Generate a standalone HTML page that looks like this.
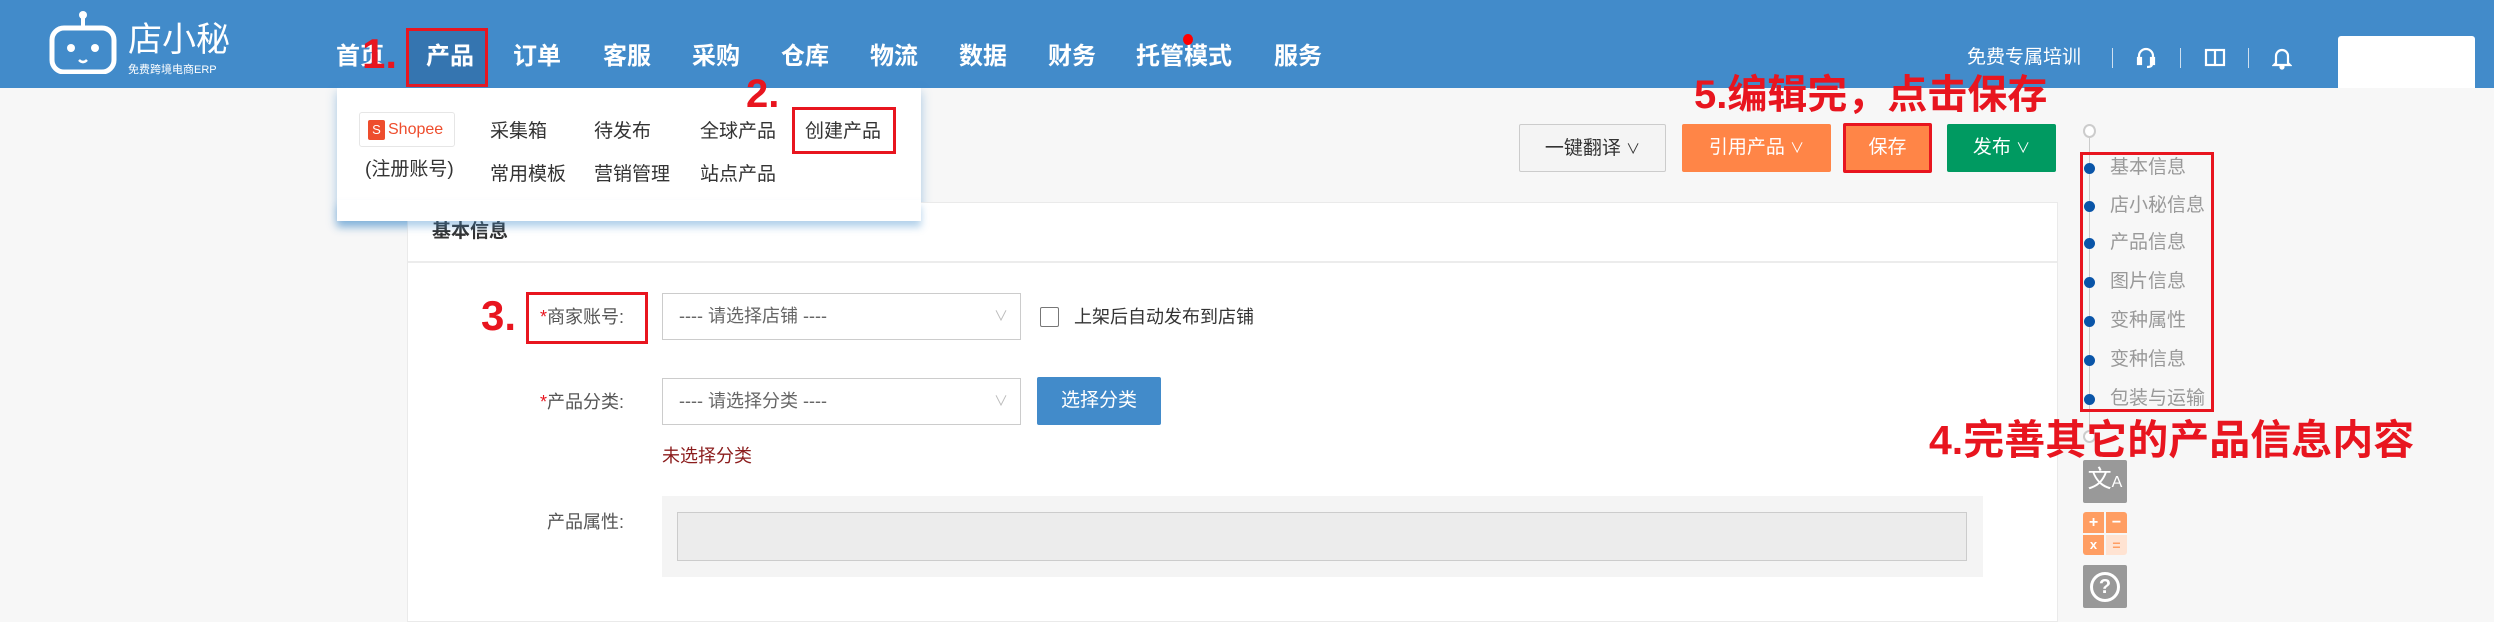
<!DOCTYPE html>
<html><head><meta charset="utf-8"><style>
*{margin:0;padding:0;box-sizing:border-box}
body{width:2494px;height:616px;overflow:hidden;background:#f7f7f7;font-family:"Liberation Sans","Noto Sans CJK SC",sans-serif;position:relative}
.a{position:absolute}
.hdr{left:0;top:0;width:2494px;height:88px;background:#428bca}
.nav{top:40px;color:#fff;font-size:24px;font-weight:bold;line-height:34px}
.red{color:#e8151f;font-weight:bold}
.dd{left:337px;top:88px;width:584px;height:133px;background:#fff;box-shadow:0 4px 10px rgba(66,139,202,.45)}
.di{font-size:19px;color:#333;line-height:24px}
.btn{height:48px;line-height:48px;text-align:center;font-size:19px;color:#fff;border-radius:2px}
.btn i{font-style:normal;font-size:14px}
.lbl{font-size:18px;color:#555;line-height:24px}
.sel{left:662px;width:359px;height:47px;border:1px solid #ccc;background:#fff;font-size:18px;color:#666;line-height:45px;padding-left:16px}
.sel span{position:absolute;right:12px;color:#bbb;font-size:14px}
.ni{left:2110px;font-size:19px;color:#999;line-height:24px}
.dot{left:2084px;width:11px;height:11px;border-radius:50%;background:#0a55a8}
</style></head><body>
<div class="a hdr"></div>
<svg class="a" style="left:48px;top:10px" width="70" height="64" viewBox="0 0 70 64"><line x1="35" y1="4" x2="35" y2="18" stroke="#fff" stroke-width="4"/><circle cx="35" cy="5" r="4" fill="#fff"/><rect x="4" y="18" width="62" height="44" rx="12" fill="none" stroke="#fff" stroke-width="5"/><circle cx="23" cy="38" r="4" fill="#fff"/><circle cx="47" cy="38" r="4" fill="#fff"/><path d="M31 50 q4 4 8 0" stroke="#fff" stroke-width="2.5" fill="none"/></svg>
<div class="a" style="left:128px;top:20px;color:#fff;font-size:34px;line-height:40px">店小秘</div>
<div class="a" style="left:128px;top:64px;color:#fff;font-size:11px;line-height:12px">免费跨境电商ERP</div>
<div class="a" style="left:406px;top:28px;width:82px;height:59px;background:#3575b0;border:3px solid #e8151f"></div>
<div class="a nav" style="left:336px">首页</div>
<div class="a nav" style="left:426px">产品</div>
<div class="a nav" style="left:513px">订单</div>
<div class="a nav" style="left:603px">客服</div>
<div class="a nav" style="left:692px">采购</div>
<div class="a nav" style="left:781px">仓库</div>
<div class="a nav" style="left:870px">物流</div>
<div class="a nav" style="left:959px">数据</div>
<div class="a nav" style="left:1048px">财务</div>
<div class="a nav" style="left:1136px">托管模式</div>
<div class="a nav" style="left:1274px">服务</div>
<div class="a" style="left:1183px;top:34px;width:10px;height:11px;border-radius:50%;background:#f00"></div>
<div class="a red" style="left:362px;top:32px;font-size:42px;line-height:44px">1.</div>
<div class="a" style="left:1967px;top:46px;color:#fff;font-size:19px;line-height:24px">免费专属培训</div>
<div class="a" style="left:2112px;top:48px;width:1px;height:20px;background:#cfe0f0"></div>
<div class="a" style="left:2180px;top:48px;width:1px;height:20px;background:#cfe0f0"></div>
<div class="a" style="left:2248px;top:48px;width:1px;height:20px;background:#cfe0f0"></div>
<svg class="a" style="left:2136px;top:47px" width="20" height="22" viewBox="0 0 20 22" fill="none" stroke="#fff" stroke-width="2.2"><path d="M3 13V9a7 7 0 0 1 14 0v4"/><rect x="2" y="11" width="3" height="6" fill="#fff"/><rect x="15" y="11" width="3" height="6" fill="#fff"/><path d="M16 17q0 3-5 3"/></svg>
<svg class="a" style="left:2204px;top:48px" width="22" height="20" viewBox="0 0 22 20" fill="none" stroke="#fff" stroke-width="2.2"><rect x="2" y="2" width="18" height="15"/><line x1="11" y1="2" x2="11" y2="17"/></svg>
<svg class="a" style="left:2272px;top:46px" width="20" height="24" viewBox="0 0 20 24" fill="none" stroke="#fff" stroke-width="2.2"><path d="M4 17V10a6 6 0 0 1 12 0v7l2 2H2z"/><circle cx="10" cy="21" r="1.5" fill="#fff"/></svg>
<div class="a" style="left:2338px;top:36px;width:137px;height:52px;background:#fff;border-radius:3px 3px 0 0"></div>

<div class="a dd">
<div class="a" style="left:22px;top:24px;width:96px;height:35px;border:1px solid #e6e6e6;border-radius:3px"></div>
<div class="a" style="left:31px;top:32px;width:17px;height:20px;background:#ee4d2d;border-radius:2px;color:#fff;font-size:13px;text-align:center;line-height:20px">S</div>
<div class="a" style="left:51px;top:31px;font-size:16px;color:#ee4d2d;line-height:22px">Shopee</div>
<div class="a di" style="left:28px;top:70px">(注册账号)</div>
<div class="a di" style="left:153px;top:32px">采集箱</div>
<div class="a di" style="left:257px;top:32px">待发布</div>
<div class="a di" style="left:363px;top:32px">全球产品</div>
<div class="a di" style="left:468px;top:32px">创建产品</div>
<div class="a di" style="left:153px;top:75px">常用模板</div>
<div class="a di" style="left:257px;top:75px">营销管理</div>
<div class="a di" style="left:363px;top:75px">站点产品</div>
<div class="a" style="left:455px;top:19px;width:104px;height:47px;border:3px solid #e8151f"></div>
</div>
<div class="a red" style="left:746px;top:72px;font-size:40px;line-height:44px">2.</div>

<div class="a" style="left:407px;top:202px;width:1651px;height:420px;background:#fff;border:1px solid #eaeaea"></div>
<div class="a" style="left:432px;top:220px;font-size:19px;color:#333;font-weight:bold;line-height:24px">基本信息</div>
<div class="a" style="left:408px;top:261px;width:1649px;height:2px;background:#ececec"></div>
<div class="a" style="left:337px;top:200px;width:584px;height:21px;background:#fff;box-shadow:0 6px 8px rgba(66,139,202,.4)"></div>

<div class="a red" style="left:481px;top:294px;font-size:42px;line-height:44px">3.</div>
<div class="a" style="left:526px;top:292px;width:122px;height:52px;border:3px solid #e8151f"></div>
<div class="a lbl" style="left:540px;top:305px"><span style="color:#e8151f">*</span>商家账号:</div>
<div class="a sel" style="top:293px">---- 请选择店铺 ----<span>∨</span></div>
<div class="a" style="left:1040px;top:307px;width:19px;height:20px;border:1px solid #777;border-radius:2px;background:#fff"></div>
<div class="a lbl" style="left:1074px;top:305px;color:#333">上架后自动发布到店铺</div>

<div class="a lbl" style="left:540px;top:390px"><span style="color:#e8151f">*</span>产品分类:</div>
<div class="a sel" style="top:378px">---- 请选择分类 ----<span>∨</span></div>
<div class="a btn" style="left:1037px;top:377px;width:124px;background:#428bca">选择分类</div>
<div class="a lbl" style="left:662px;top:444px;color:#8b1c1c">未选择分类</div>
<div class="a lbl" style="left:547px;top:510px">产品属性:</div>
<div class="a" style="left:662px;top:496px;width:1321px;height:81px;background:#f4f4f4"></div>
<div class="a" style="left:677px;top:512px;width:1290px;height:49px;background:#ececec;border:1px solid #ccc"></div>

<div class="a red" style="left:1694px;top:72px;font-size:40px;line-height:46px">5.编辑完，点击保存</div>
<div class="a btn" style="left:1519px;top:124px;width:147px;background:#f4f4f4;border:1px solid #ccc;color:#333">一键翻译 <i>∨</i></div>
<div class="a btn" style="left:1682px;top:124px;width:149px;background:#ff8547">引用产品 <i>∨</i></div>
<div class="a btn" style="left:1843px;top:123px;width:89px;height:50px;background:#ff8547;border:3px solid #e8151f;line-height:44px">保存</div>
<div class="a btn" style="left:1947px;top:124px;width:109px;background:#009a61">发布 <i>∨</i></div>

<div class="a" style="left:2089px;top:136px;width:1px;height:300px;background:#ccc"></div>
<div class="a" style="left:2083px;top:124px;width:13px;height:14px;border-radius:50%;border:2px solid #ccc;background:#fff"></div>
<div class="a" style="left:2080px;top:152px;width:134px;height:260px;border:3px solid #e8151f"></div>
<div class="a dot" style="top:163px"></div><div class="a ni" style="top:156px">基本信息</div>
<div class="a dot" style="top:201px"></div><div class="a ni" style="top:194px">店小秘信息</div>
<div class="a dot" style="top:238px"></div><div class="a ni" style="top:231px">产品信息</div>
<div class="a dot" style="top:277px"></div><div class="a ni" style="top:270px">图片信息</div>
<div class="a dot" style="top:316px"></div><div class="a ni" style="top:309px">变种属性</div>
<div class="a dot" style="top:355px"></div><div class="a ni" style="top:348px">变种信息</div>
<div class="a dot" style="top:394px"></div><div class="a ni" style="top:387px">包装与运输</div>
<div class="a" style="left:2083px;top:430px;width:13px;height:13px;border-radius:50%;border:2px solid #ccc;background:#fff"></div>
<div class="a red" style="left:1929px;top:417px;font-size:41px;line-height:46px">4.完善其它的产品信息内容</div>

<div class="a" style="left:2083px;top:460px;width:44px;height:43px;background:#999;border-radius:2px;color:#fff;font-size:24px;line-height:40px;text-align:center">文<span style="font-size:16px">A</span></div>
<div class="a" style="left:2083px;top:512px;width:44px;height:43px;border-radius:3px;overflow:hidden">
<div class="a" style="left:0;top:0;width:21px;height:21px;background:#ff9e63;color:#fff;font-size:16px;text-align:center;line-height:21px;font-weight:bold">+</div>
<div class="a" style="left:23px;top:0;width:21px;height:21px;background:#ff9e63;color:#fff;font-size:16px;text-align:center;line-height:21px;font-weight:bold">−</div>
<div class="a" style="left:0;top:23px;width:21px;height:20px;background:#ff9e63;color:#fff;font-size:13px;text-align:center;line-height:20px;font-weight:bold">x</div>
<div class="a" style="left:23px;top:23px;width:21px;height:20px;background:#ffe3d2;color:#ff9e63;font-size:14px;text-align:center;line-height:20px;font-weight:bold">=</div></div>
<div class="a" style="left:2083px;top:565px;width:44px;height:43px;background:#999;border-radius:2px"></div>
<div class="a" style="left:2090px;top:572px;width:30px;height:30px;border:3px solid #fff;border-radius:50%;color:#fff;font-size:20px;font-weight:bold;text-align:center;line-height:24px">?</div>
</body></html>
